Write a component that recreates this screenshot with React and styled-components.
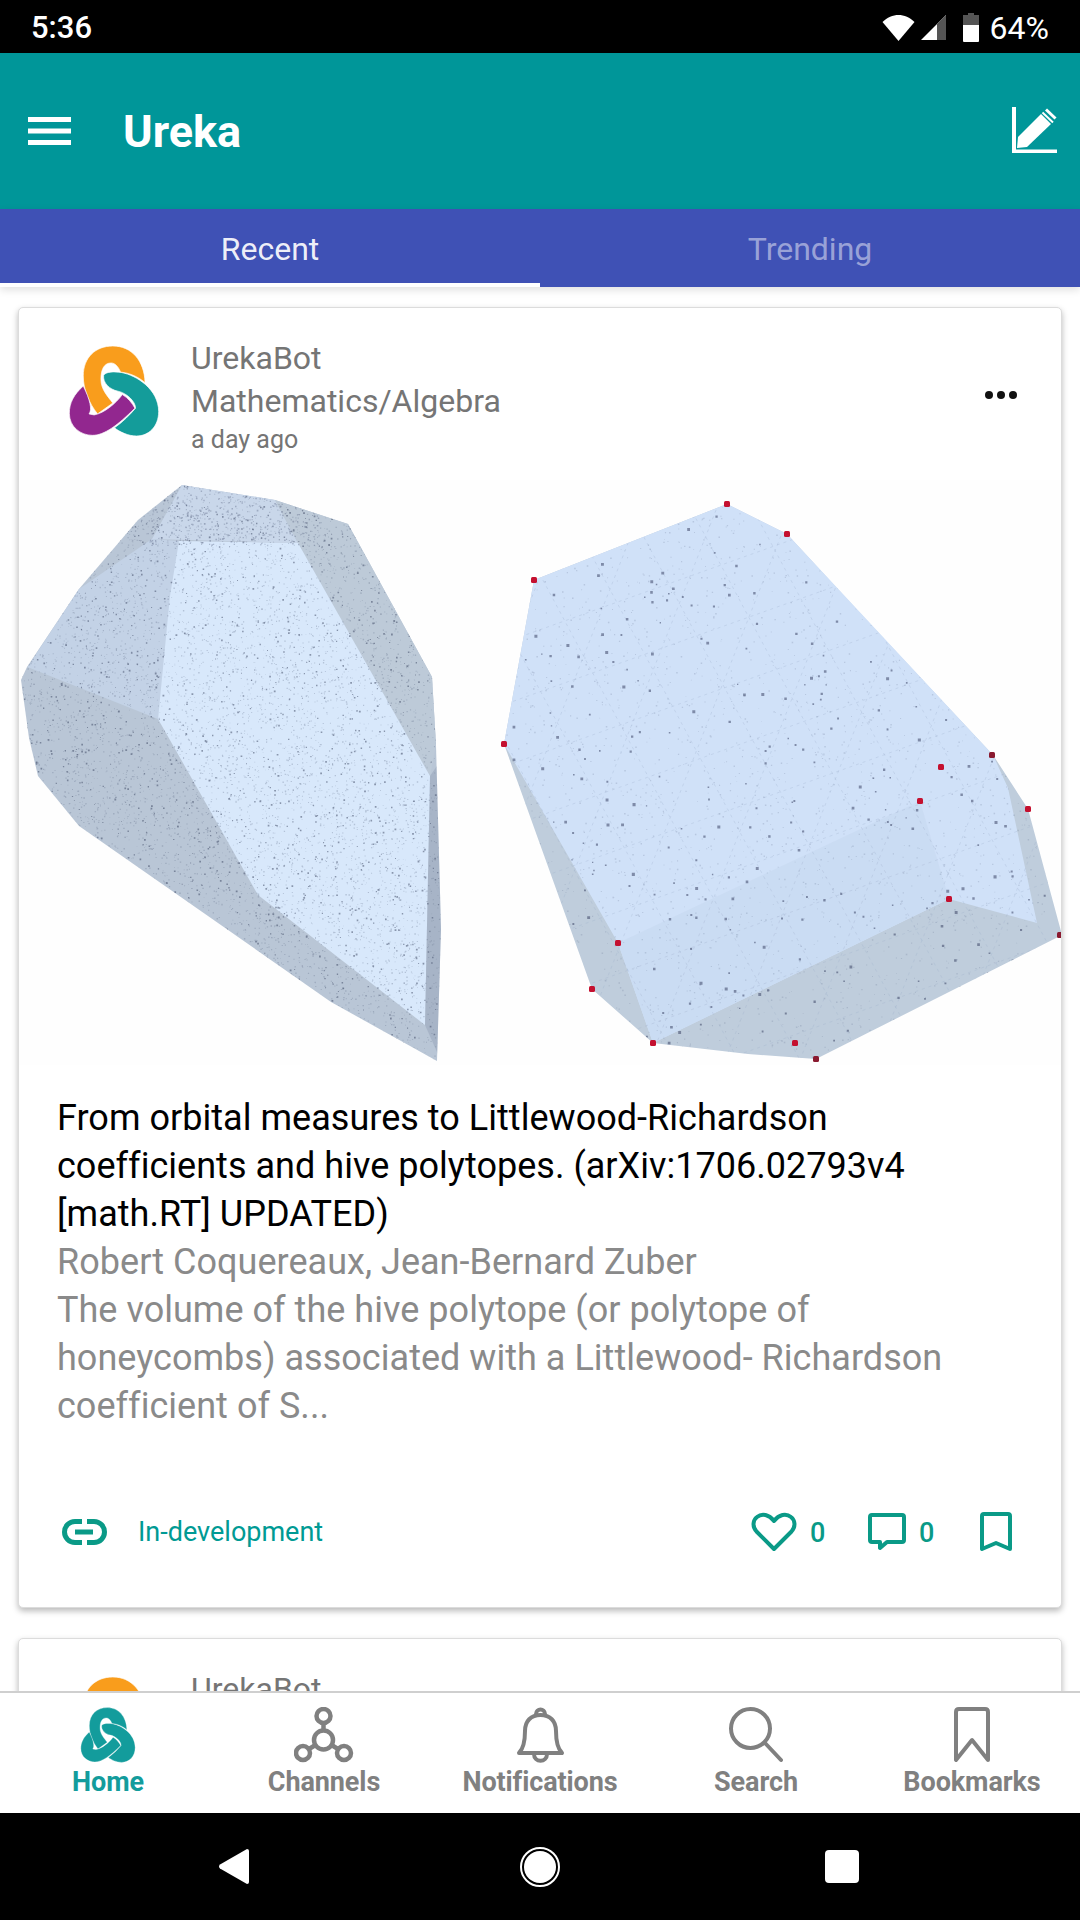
import React from 'react';
import styled, { createGlobalStyle } from 'styled-components';

const Global = createGlobalStyle`
  html, body { margin: 0; padding: 0; background: #fff; }
  * { box-sizing: border-box; }
`;

const Screen = styled.div`
  width: 1080px; height: 1920px; display: flex; flex-direction: column; overflow: hidden;
  background: #fff; font-family: Roboto, "Liberation Sans", sans-serif;
`;
const StatusBar = styled.div`
  height: 53px; flex: none; background: #000; color: #fff; display: flex; align-items: center;
  padding: 2px 31px 0 31px; font-size: 31px; font-weight: 500;
`;
const StatusRight = styled.div`
  margin-left: auto; display: flex; align-items: center; font-weight: 400; font-size: 32px;
  svg { display: block; }
`;
const Toolbar = styled.div`
  height: 156px; flex: none; background: #009699; display: flex; align-items: center; color: #fff;
  padding: 0 22px 0 28px;
`;
const AppTitle = styled.div`
  font-size: 45px; font-weight: 700; margin-left: 52px; line-height: 48px; margin-top: 2px;
`;
const Tabs = styled.div`
  height: 78px; flex: none; background: #3f51b5; display: flex; position: relative; z-index: 1;
  box-shadow: 0 3px 8px rgba(0,0,0,.12);
`;
const Tab = styled.div`
  flex: 1; display: flex; align-items: center; justify-content: center; font-size: 32px; padding-top: 6px;
  color: ${p => (p.$active ? 'rgba(255,255,255,.92)' : 'rgba(255,255,255,.48)')};
  border-bottom: 4px solid ${p => (p.$active ? '#fff' : 'transparent')};
`;
const Feed = styled.div`
  flex: 1; min-height: 0; overflow: hidden; padding: 20px 18px 0; display: flex; flex-direction: column; gap: 30px;
`;
const Card = styled.article`
  flex: none; background: #fff; border: 1px solid #dcdcdc; border-radius: 5px;
  box-shadow: 0 3px 6px rgba(0,0,0,.28);
`;
const PostHead = styled.header`
  display: flex; padding: 29px 44px 24px 50px; color: #757575;
`;
const Avatar = styled.svg`
  width: 90px; height: 90px; flex: none; margin: 9px 32px 0 0; display: block;
`;
const Meta = styled.div`
  flex: 1; display: flex; flex-direction: column;
`;
const MetaLine = styled.div`
  font-size: 32px; line-height: 43px;
`;
const MetaTime = styled.div`
  font-size: 25px; line-height: 33px;
`;
const Dots = styled.div`
  display: flex; gap: 4px; margin-top: 54px; height: 8px;
  i { width: 8px; height: 8px; border-radius: 50%; background: #111; display: block; }
`;
const Figure = styled.svg`
  display: block; width: 1042px; height: 585px;
`;
const Body = styled.div`
  padding: 29px 60px 0 38px; font-size: 36px; line-height: 48px; color: #8a8a8a; letter-spacing: .03px;
`;
const Title = styled.div`
  color: #000;
`;
const Footer = styled.footer`
  display: flex; align-items: center; height: 40px; margin-top: 82px; margin-bottom: 55px; padding: 0 49px 0 43px;
  color: #009a94;
`;
const TopicLabel = styled.span`
  font-size: 27px; margin-left: 31px;
`;
const Actions = styled.div`
  margin-left: auto; display: flex; align-items: center; color: #0a9a87;
  svg { display: block; }
`;
const Count = styled.span`
  font-size: 27px; font-weight: 500; width: 15px; margin: 2px 0 0 13px; color: #0a9a87;
`;
const Spacer = styled.span`
  width: ${p => p.$w}px;
`;
const BottomNav = styled.nav`
  height: 122px; flex: none; background: #fff; border-top: 2px solid #cfcfcf; display: grid;
  grid-template-columns: repeat(5, 1fr); position: relative;
`;
const NavItem = styled.div`
  display: flex; flex-direction: column; align-items: center; padding-top: 14px;
  color: ${p => (p.$active ? '#139c9c' : '#808080')}; font-size: 27px; font-weight: 700;
  svg { display: block; height: 56px; }
`;
const NavLabel = styled.span`
  line-height: 30px; margin-top: 4px; letter-spacing: -.1px;
`;
const SysBar = styled.div`
  height: 107px; flex: none; background: #000; display: flex; align-items: center;
  padding: 0 0 0 219px;
`;
const RecentKey = styled.div`
  width: 34px; height: 33px; border-radius: 4px; background: #fff; margin-left: 265px;
`;
const HomeKey = styled.div`
  width: 40px; height: 40px; border-radius: 50%; border: 2px solid #fff; padding: 2px; background-clip: content-box; background-color: #fff;
  margin-left: 271px;
`;

/* Logo paths */
const ORANGE = 'M110 222C85 190 68 150 68 110C68 55 105 22 155 22C210 22 248 65 250 130C225 108 195 100 178 99C170 80 160 72 150 72C130 72 120 90 120 120C120 150 140 170 155 190Z';
const TEAL = 'M128 108C135 97 160 97 180 100C225 108 290 150 290 215C290 260 260 287 225 287C200 287 175 275 160 263C185 245 205 225 222 205C222 185 195 160 170 155C145 150 125 130 128 108Z';
const PURPLE = 'M68 140C40 165 27 190 27 220C27 260 60 285 95 285C130 285 170 255 220 205C212 190 200 175 183 165C165 190 130 220 100 225L85 222C95 210 88 180 68 140Z';

function Logo({ mono }) {
  return (
    <>
      <path d={TEAL} fill={mono || '#149c9a'} stroke="#fff" strokeWidth={mono ? 1.5 : 2} />
      <path d={ORANGE} fill={mono || '#f99d1c'} stroke="#fff" strokeWidth={mono ? 1.5 : 2} />
      <path d={PURPLE} fill={mono || '#92278f'} stroke="#fff" strokeWidth={mono ? 1.5 : 2} />
    </>
  );
}

/* Seeded stipple for the figure */
function rng(seed) {
  let s = seed;
  return () => {
    s = (s * 1664525 + 1013904223) % 4294967296;
    return s / 4294967296;
  };
}
function stipple(seed, n, x0, y0, w, h, size) {
  const r = rng(seed);
  let d = '';
  for (let i = 0; i < n; i++) {
    const x = (x0 + r() * w).toFixed(1);
    const y = (y0 + r() * h).toFixed(1);
    const s = size * (0.6 + r() * 0.8);
    d += `M${x} ${y}h${s.toFixed(1)}v${s.toFixed(1)}h-${s.toFixed(1)}z`;
  }
  return d;
}
function lattice() {
  const out = [];
  for (let i = -6; i < 14; i++) {
    out.push([500 + i * 62, 500, 500 + i * 62 + 300, 1060]);
    out.push([500, 520 + i * 62, 1060, 320 + i * 62]);
    out.push([500 + i * 75, 1060, 500 + i * 75 + 220, 500]);
  }
  return out;
}
const L_OUT = '182,485 275,500 348,524 432,677 436,745 441,929 437,1061 331,1002 79,826 38,776 29,738 21,680 27,667 79,589 138,520';
const R_OUT = '727,504 787,534 859,612 993,755 1028,809 1062,935 816,1059 748,1054 653,1043 592,989 504,744 534,580';
const leftFaint = stipple(7, 9000, 20, 485, 422, 577, 1);
const leftDark = stipple(23, 2200, 20, 485, 422, 577, 1.3);
const leftTop = stipple(31, 500, 130, 485, 190, 60, 1.2);
const rightFaint = stipple(11, 2600, 504, 504, 558, 556, 1.1);
const rightDark = stipple(47, 360, 504, 504, 558, 556, 2.2);
const GRID = lattice();
const REDS = [[727,504],[787,534],[534,580],[504,744],[992,755],[941,767],[920,801],[1028,809],[949,899],[1060,935],[618,943],[592,989],[653,1043],[795,1043],[816,1059]];

function Polytopes() {
  return (
    <Figure viewBox="19 480 1042 585" aria-label="Two hive polytopes">
      <defs>
        <clipPath id="lp"><polygon points={L_OUT} /></clipPath>
        <clipPath id="rp"><polygon points={R_OUT} /></clipPath>
      </defs>
      <rect x="19" y="480" width="1042" height="585" fill="#fefefe" />
      <polygon points={L_OUT} fill="#b9c6d6" />
      <polygon points="182,485 275,500 298,543 152,539" fill="#c9d7ea" />
      <polygon points="152,539 179,541 158,719 27.5,667 79,589" fill="#c3d2e6" />
      <polygon points="275,500 348,524 432,677 436,745 430,776 298,543" fill="#bdcad8" />
      <polygon points="179,541 298,543 430,776 425,1025 258,895 158,719 170,596" fill="#d8e8fb" />
      <g clipPath="url(#lp)">
        <path d={leftFaint} fill="#5d6a85" opacity=".3" />
        <path d={leftTop} fill="#4d5a78" opacity=".35" />
        <path d={leftDark} fill="#3a4460" opacity=".5" />
        <polygon points="430,776 441,760 441,1061 425,1025" fill="#6b7690" opacity=".22" />
      </g>
      <polygon points={R_OUT} fill="#bfcddc" />
      <polygon points="534,580 727,504 787,534 993,755 1008,788 1037,923 949,899 653,1043 618,943 504,744" fill="#d0e1f8" />
      <polygon points="618,943 920,801 949,899 653,1043" fill="#cbdcf3" />
      <g clipPath="url(#rp)">
        {GRID.map(([x1, y1, x2, y2], i) => (
          <line key={i} x1={x1} y1={y1} x2={x2} y2={y2} stroke="#9fb0cc" strokeWidth="1" strokeDasharray="3 4" opacity=".3" />
        ))}
        <path d={rightFaint} fill="#6d7a98" opacity=".25" />
        <path d={rightDark} fill="#3c4666" opacity=".55" />
      </g>
      {REDS.map(([x, y], i) => (
        <rect key={i} x={x - 3} y={y - 3} width="6" height="6" rx="1.5" fill={i % 5 === 4 ? '#8a1a30' : '#c4102f'} />
      ))}
    </Figure>
  );
}

export default function App() {
  return (
    <Screen>
      <Global />
      <StatusBar>
        <span>5:36</span>
        <StatusRight>
          <svg width="33" height="26" viewBox="0 0 33 26"><path d="M16.5 26L.5 7C5 2.500 11 0 16.500 0C22 0 28 2.500 32.500 7Z" fill="#fff" /></svg>
          <svg width="25" height="25" viewBox="0 0 25 25" style={{ marginLeft: 6 }}>
            <path d="M0 25L25 0V25Z" fill="#fff" />
            <path d="M16 9L25 0V25H16Z" fill="#555" />
          </svg>
          <svg width="16" height="29" viewBox="0 0 16 29" style={{ marginLeft: 17 }}>
            <path d="M5 0H11V2H16V12H0V2H5Z" fill="#555" />
            <path d="M0 12H16V28Q16 29 15 29H1Q0 29 0 28Z" fill="#fff" />
          </svg>
          <span style={{ marginLeft: 11 }}>64%</span>
        </StatusRight>
      </StatusBar>

      <Toolbar>
        <svg width="43" height="28" viewBox="0 0 43 28" style={{ flex: 'none' }}>
          <path d="M0 0H43V5H0ZM0 11.500H43V16.500H0ZM0 23H43V28H0Z" fill="#fff" />
        </svg>
        <AppTitle>Ureka</AppTitle>
        <svg width="46" height="46" viewBox="0 0 46 46" style={{ marginLeft: 'auto', marginTop: -2 }}>
          <path d="M0 0H4V42.500H45V46H0Z" fill="#fff" />
          <path d="M5 41L6 30L29 7L39 17L15 40Z" fill="#fff" />
          <path d="M30.500 5.500L41 15.500" stroke="#fff" strokeWidth="2" />
          <path d="M34 2.500L43.500 11.500" stroke="#fff" strokeWidth="3" />
        </svg>
      </Toolbar>

      <Tabs>
        <Tab $active>Recent</Tab>
        <Tab>Trending</Tab>
      </Tabs>

      <Feed>
        <Card>
          <PostHead>
            <Avatar viewBox="27 22 263 265"><Logo /></Avatar>
            <Meta>
              <MetaLine>UrekaBot</MetaLine>
              <MetaLine>Mathematics/Algebra</MetaLine>
              <MetaTime>a day ago</MetaTime>
            </Meta>
            <Dots><i /><i /><i /></Dots>
          </PostHead>
          <Polytopes />
          <Body>
            <Title>From orbital measures to Littlewood-Richardson coefficients and hive polytopes. (arXiv:1706.02793v4 [math.RT] UPDATED)</Title>
            <div>Robert Coquereaux, Jean-Bernard Zuber</div>
            <div>The volume of the hive polytope (or polytope of honeycombs) associated with a Littlewood- Richardson coefficient of S...</div>
          </Body>
          <Footer>
            <svg width="45" height="26" viewBox="0 0 45 26" fill="none" stroke="#0a9a87" strokeWidth="5">
              <path d="M20 2.500H13A10.500 10.500 0 0 0 13 23.500H20" />
              <path d="M25 2.500H32A10.500 10.500 0 0 1 32 23.500H25" />
              <path d="M13 13H31" />
            </svg>
            <TopicLabel>In-development</TopicLabel>
            <Actions>
              <svg width="46" height="40" viewBox="0 0 46 40" fill="none" stroke="currentColor" strokeWidth="4" strokeLinejoin="round">
                <path d="M23 37L5.500 19.500C1 14.500 2 8 6 5C11 1 18 2.500 23 9C28 2.500 35 1 40 5C44 8 45 14.500 40.500 19.500Z" />
              </svg>
              <Count>0</Count>
              <Spacer $w={43} />
              <svg width="38" height="38" viewBox="0 0 38 38" fill="none" stroke="currentColor" strokeWidth="4" strokeLinejoin="round">
                <path d="M4 2H34Q36 2 36 4V27Q36 29 34 29H19L12 35V29H4Q2 29 2 27V4Q2 2 4 2Z" />
              </svg>
              <Count>0</Count>
              <Spacer $w={46} />
              <svg width="32" height="40" viewBox="0 0 32 40" fill="none" stroke="currentColor" strokeWidth="4" strokeLinejoin="round">
                <path d="M2 37V4Q2 2 4 2H28Q30 2 30 4V37L16 31Z" />
              </svg>
            </Actions>
          </Footer>
        </Card>
        <Card>
          <PostHead>
            <Avatar viewBox="27 22 263 265"><Logo /></Avatar>
            <Meta>
              <MetaLine>UrekaBot</MetaLine>
            </Meta>
          </PostHead>
        </Card>
      </Feed>

      <BottomNav>
        <NavItem $active>
          <svg viewBox="24 19 269 271" width="56"><Logo mono="#139c9c" /></svg>
          <NavLabel>Home</NavLabel>
        </NavItem>
        <NavItem>
          <svg viewBox="0 0 60 56" width="60" fill="none" stroke="currentColor" strokeWidth="4.500">
            <circle cx="29.500" cy="9" r="7" />
            <circle cx="29.500" cy="33" r="9.500" />
            <circle cx="9" cy="46" r="7" />
            <circle cx="50" cy="46" r="7" />
            <path d="M29.500 16V23.500M21.500 38L15 42M37.500 38L44 42" />
          </svg>
          <NavLabel>Channels</NavLabel>
        </NavItem>
        <NavItem>
          <svg viewBox="0 0 49 56" width="49" fill="none" stroke="currentColor" strokeWidth="4" strokeLinejoin="round" strokeLinecap="round">
            <path d="M3 46C7 42 9 36 9 24C9 14 15 8 24.500 8C34 8 40 14 40 24C40 36 42 42 46 46Z" />
            <path d="M20 7C20 1 29 1 29 7" />
            <path d="M18 47C18 56 31 56 31 47" />
          </svg>
          <NavLabel>Notifications</NavLabel>
        </NavItem>
        <NavItem>
          <svg viewBox="0 0 54 56" width="54" fill="none" stroke="currentColor" strokeWidth="4" strokeLinecap="round">
            <circle cx="21.500" cy="21.500" r="19.500" />
            <path d="M36 36L52 53" />
          </svg>
          <NavLabel>Search</NavLabel>
        </NavItem>
        <NavItem>
          <svg viewBox="0 0 36 56" width="36" fill="none" stroke="currentColor" strokeWidth="4" strokeLinejoin="round">
            <path d="M2 53V5Q2 2 5 2H31Q34 2 34 5V53L18 33Z" />
          </svg>
          <NavLabel>Bookmarks</NavLabel>
        </NavItem>
      </BottomNav>

      <SysBar>
        <svg width="30" height="35" viewBox="0 0 30 35"><path d="M28 0Q30 0 30 2V33Q30 35 28 35L1 19.500Q-1 17.500 1 15.500Z" fill="#fff" /></svg>
        <HomeKey />
        <RecentKey />
      </SysBar>
    </Screen>
  );
}
